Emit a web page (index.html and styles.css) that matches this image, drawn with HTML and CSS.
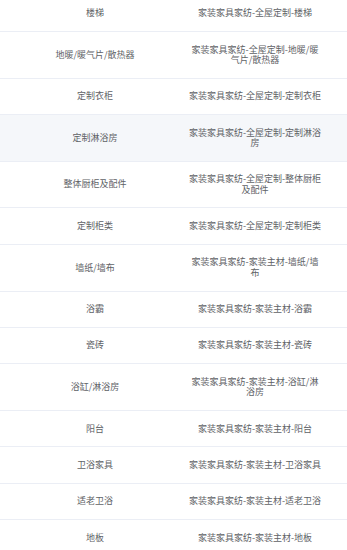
FILE: index.html
```html
<!DOCTYPE html>
<html lang="zh">
<head>
<meta charset="utf-8">
<link rel="stylesheet" href="styles.css">
</head>
<body>
<div class="table">
  <div class="row"><div class="cell c1">楼梯</div><div class="cell c2">家装家具家纺-全屋定制-楼梯</div></div>
  <div class="row"><div class="cell c1">地暖/暖气片/散热器</div><div class="cell c2">家装家具家纺-全屋定制-地暖/暖气片/散热器</div></div>
  <div class="row"><div class="cell c1">定制衣柜</div><div class="cell c2">家装家具家纺-全屋定制-定制衣柜</div></div>
  <div class="row hover"><div class="cell c1">定制淋浴房</div><div class="cell c2">家装家具家纺-全屋定制-定制淋浴房</div></div>
  <div class="row"><div class="cell c1">整体厨柜及配件</div><div class="cell c2">家装家具家纺-全屋定制-整体厨柜及配件</div></div>
  <div class="row"><div class="cell c1">定制柜类</div><div class="cell c2">家装家具家纺-全屋定制-定制柜类</div></div>
  <div class="row"><div class="cell c1">墙纸/墙布</div><div class="cell c2">家装家具家纺-家装主材-墙纸/墙布</div></div>
  <div class="row"><div class="cell c1">浴霸</div><div class="cell c2">家装家具家纺-家装主材-浴霸</div></div>
  <div class="row"><div class="cell c1">瓷砖</div><div class="cell c2">家装家具家纺-家装主材-瓷砖</div></div>
  <div class="row"><div class="cell c1">浴缸/淋浴房</div><div class="cell c2">家装家具家纺-家装主材-浴缸/淋浴房</div></div>
  <div class="row"><div class="cell c1">阳台</div><div class="cell c2">家装家具家纺-家装主材-阳台</div></div>
  <div class="row"><div class="cell c1">卫浴家具</div><div class="cell c2">家装家具家纺-家装主材-卫浴家具</div></div>
  <div class="row"><div class="cell c1">适老卫浴</div><div class="cell c2">家装家具家纺-家装主材-适老卫浴</div></div>
  <div class="row"><div class="cell c1">地板</div><div class="cell c2">家装家具家纺-家装主材-地板</div></div>
</div>
</body>
</html>
```
FILE: styles.css
```css
html, body {
  margin: 0;
  padding: 0;
  background: #ffffff;
}
body {
  font-family: "Noto Sans CJK SC", "Noto Sans", sans-serif;
  font-size: 9px;
  color: #606266;
  overflow: hidden;
}
.table {
  margin-top: -4.4px;
}
.row {
  display: grid;
  grid-template-columns: 163px 184px;
  align-items: center;
  border-bottom: 1px solid #ebeef5;
}
.row.hover {
  background: #f5f7fa;
}
.cell {
  line-height: 10.3px;
  padding: 12.55px 0;
  text-align: center;
}
.c1 {
  padding-left: 27px;
}
.c2 {
  padding-left: 25.5px;
  padding-right: 25.5px;
}
```
